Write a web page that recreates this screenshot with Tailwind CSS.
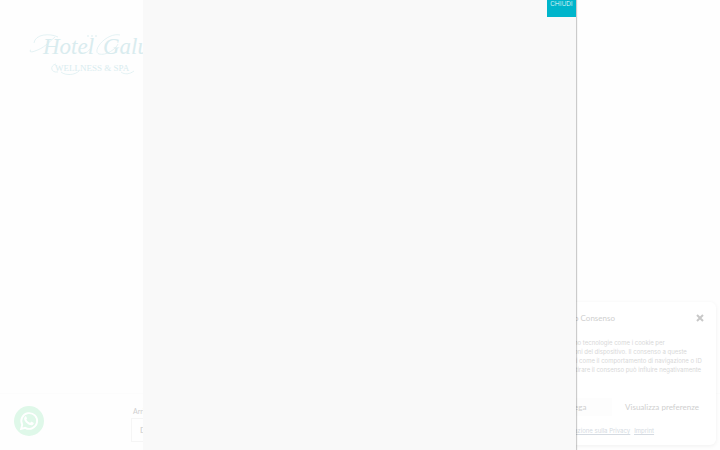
<!DOCTYPE html>
<html lang="it">
<head>
<meta charset="utf-8">
<meta name="viewport" content="width=device-width, initial-scale=1">
<title>Hotel Wellness &amp; Spa</title>
<script src="https://cdn.jsdelivr.net/npm/@tailwindcss/browser@4"></script>
</head>
<body class="relative flex h-screen flex-col justify-between overflow-hidden bg-[#fefefe] font-['Lato',sans-serif]">
  <header class="px-7 pt-8">
    <a href="#" aria-label="Hotel Wellness &amp; Spa" class="block w-40">
      <svg viewBox="0 0 160 48" class="w-40" fill="#d9ecef">
        <g font-family="'Liberation Serif',serif">
          <text x="15" y="22" font-size="23" font-style="italic">Hotel</text>
          <text x="75" y="22" font-size="23" font-style="italic">Galu</text>
          <text x="27" y="39" font-size="9">WELLNESS &amp; SPA</text>
        </g>
        <g><circle cx="60" cy="4" r=".8"/><circle cx="64" cy="4" r=".8"/><circle cx="68" cy="4" r=".8"/></g>
        <g fill="none" stroke="#d9ecef" stroke-width=".7">
          <path d="M6 11C7 2 22 1 30 5M3 18c-3 1 0 3 4 1 9-3 13-8 20-14M62 17c-2 3-5 5-9 4M92 3C79 0 63 19 71 22c7 2 17-5 19-10"/>
          <path d="M28 32c-6 1-6 9 2 8m3 0c5 4 14 3 18-1m42 1c4 3 9 2 13-1"/>
        </g>
      </svg>
    </a>
  </header>

  <footer class="flex items-end border-t border-[#fcfcfc] px-[14px] pb-2 pt-3">
    <a href="#" aria-label="WhatsApp" class="mb-[6px] flex size-[30px] items-center justify-center rounded-full bg-[#dff8e9]">
      <svg viewBox="0 0 24 24" class="size-5" fill="none" stroke="#fff">
        <path stroke-width="2.2" d="M2.5 21.5l1.4-5A9.5 9.5 0 1 1 7.500 20.200z"/>
        <path fill="#fff" stroke="none" d="M8.600 6.600c-.4-.5-1-.4-1.500.2-2 2.400-.3 5.300 2.200 7.700 2.700 2.500 5.800 3.700 7.700 1.700.9-.9.900-1.900.4-2.200l-2.200-1.100c-.5-.2-.8 0-1.100.5-.6.8-.8.9-1.500.5-1.600-.8-2.700-1.800-3.600-3.400-.3-.5 0-.7.4-1.200.3-.4.300-.6.1-1z"/>
      </svg>
    </a>
    <form class="ml-[87px]">
      <label for="arrival" class="block pl-[2px] text-[7px] leading-[9px] text-[#cfcfcf]">Arrivo</label>
      <input id="arrival" type="text" value="D" class="mt-[2px] block h-6 w-24 border border-[#f5f5f5] px-2 text-[8px] text-[#cccccc]">
    </form>
  </footer>

  <section aria-label="Consenso" class="absolute bottom-[5px] right-[4px] w-[146px] rounded-md bg-white pb-[10px] pr-3 pt-2 text-[#d8d8d8] shadow-[0_1px_4px_rgba(0,0,0,0.06)]">
    <div class="flex h-4 items-center justify-between">
      <h2 class="pl-1 text-[8px] leading-4 text-[#cfcfcf]">o Consenso</h2>
      <button type="button" aria-label="Chiudi" class="size-2">
        <svg viewBox="0 0 8 8" class="size-2" stroke="#c8c8c8" stroke-width="2"><path d="M1 1l6 6M7 1L1 7"/></svg>
      </button>
    </div>
    <p class="mt-3 whitespace-nowrap pl-1 font-['Inter',sans-serif] text-[6px] leading-[9px]">no tecnologie come i cookie per<br>oni del dispositivo. Il consenso a queste<br>ti come il comportamento di navigazione o ID<br>itirare il consenso può influire negativamente</p>
    <div class="mt-6 flex h-[18px] text-[8px] leading-[18px] text-[#cfcfcf]">
      <button type="button" class="w-[42px] bg-[#fdfdfd] pl-[4px] text-left">ega</button>
      <button type="button" class="flex-1 whitespace-nowrap pl-2 text-center">Visualizza preferenze</button>
    </div>
    <nav class="mt-[10px] flex gap-1 whitespace-nowrap pl-1 font-['Inter',sans-serif] text-[6px] leading-[9px] text-[#d5dbe2] underline">
      <a href="#">azione sulla Privacy</a><a href="#">Imprint</a>
    </nav>
  </section>

  <div role="dialog" aria-label="Finestra" class="absolute inset-y-0 left-[143px] right-[144px] bg-[#f9f9f9] shadow-[1px_0_1px_rgba(0,0,0,0.2)]">
    <button type="button" class="absolute right-0 top-0 flex h-[17px] w-[29px] justify-center bg-[#00b5cb] font-['Roboto',sans-serif] text-[7px] font-light leading-[8px] text-white">CHIUDI</button>
  </div>
</body>
</html>
